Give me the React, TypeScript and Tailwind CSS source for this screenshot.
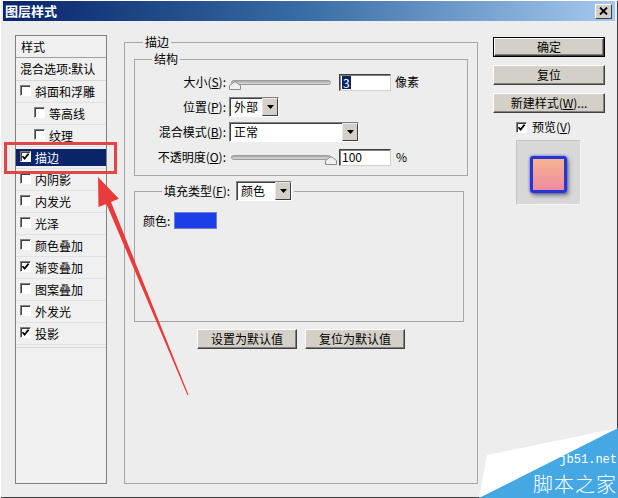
import type { ReactNode } from 'react'

const effects = [
  { label: '斜面和浮雕' },
  { label: '等高线', sub: true },
  { label: '纹理', sub: true },
  { label: '描边', checked: true, selected: true },
  { label: '内阴影' },
  { label: '内发光' },
  { label: '光泽' },
  { label: '颜色叠加' },
  { label: '渐变叠加', checked: true },
  { label: '图案叠加' },
  { label: '外发光' },
  { label: '投影', checked: true },
]

function Check({ checked }: { checked?: boolean }) {
  return (
    <span className="flex h-[11px] w-[11px] shrink-0 items-center justify-center border border-t-[#808080] border-l-[#808080] border-r-white border-b-white bg-white shadow-[inset_1px_1px_0_#404040]">
      {checked && (
        <svg width="9" height="9" viewBox="0 0 9 9">
          <path d="M1.5 4.2 L3.6 6.6 L7.6 1.6" stroke="#000" strokeWidth="1.7" fill="none" />
        </svg>
      )}
    </span>
  )
}

function Btn({ children, primary, w }: { children: ReactNode; primary?: boolean; w: string }) {
  return (
    <div className={`${w} ${primary ? 'border border-black' : ''} h-[20px] shrink-0`}>
      <div className="flex h-full w-full items-center justify-center border border-t-white border-l-white border-r-[#404040] border-b-[#404040] bg-[#d4d0c8] shadow-[inset_-1px_-1px_0_#808080] leading-none">
        {children}
      </div>
    </div>
  )
}

function Field({ children }: { children: ReactNode }) {
  return (
    <div className="flex h-[17px] w-[52px] items-center border border-t-[#404040] border-l-[#404040] border-r-[#d4d0c8] border-b-[#d4d0c8] bg-white pl-[2px] shadow-[inset_1px_1px_0_#808080]">
      {children}
    </div>
  )
}

function Select({ value, w }: { value: string; w: string }) {
  return (
    <div className={`${w} flex h-[20px] items-stretch border border-t-[#808080] border-l-[#808080] border-r-white border-b-white bg-white shadow-[inset_1px_1px_0_#404040]`}>
      <span className="flex flex-1 items-center pl-[4px] leading-none">{value}</span>
      <span className="flex w-[16px] items-center justify-center border border-t-[#e8e8e8] border-l-[#e8e8e8] border-r-[#404040] border-b-[#404040] bg-[#d4d0c8]">
        <svg width="7" height="4" viewBox="0 0 7 4">
          <path d="M0 0 H7 L3.5 4 Z" fill="#000" />
        </svg>
      </span>
    </div>
  )
}

function Slider({ at }: { at: string }) {
  return (
    <div className="relative flex h-[14px] w-[104px] items-center px-[2px]">
      <div className="h-[5px] w-full rounded-full border border-[#9a9a9a] bg-gradient-to-b from-[#a8a8a8] to-[#dcdcdc]" />
      <svg className={`absolute top-[6px] ${at}`} width="12" height="9" viewBox="0 0 12 9">
        <path d="M0.5 8.5 V4.5 L6 0.5 L11.5 4.5 V8.5 Z" fill="#efefef" stroke="#8a8a8a" />
      </svg>
    </div>
  )
}

function Row({ label, children }: { label: ReactNode; children: ReactNode }) {
  return (
    <div className="flex h-[20px] items-center">
      <span className="w-[91px] text-right leading-none">{label}</span>
      <div className="ml-[3px] flex items-center">{children}</div>
    </div>
  )
}

export default function App() {
  return (
    <div className="relative flex h-[498px] w-[618px] flex-col overflow-hidden bg-[#ededed] px-[3px] pt-[1px] font-['Noto_Sans_CJK_SC','Liberation_Sans',sans-serif] text-[12px] text-black shadow-[inset_1px_1px_0_#ffffff,inset_-1px_-1px_0_#404040]">
      {/* title bar */}
      <div className="flex h-[20px] shrink-0 items-center bg-gradient-to-r from-[#0a246a] via-[#3a6ea5] to-[#a6caf0] pl-[2px] pr-[3px]">
        <span className="text-[13px] font-bold text-white">图层样式</span>
        <div className="ml-auto flex h-[15px] w-[17px] items-center justify-center border border-t-white border-l-white border-r-[#404040] border-b-[#404040] bg-[#d4d0c8]">
          <svg width="9" height="8" viewBox="0 0 9 8">
            <path d="M1 0.5 L8 7.5 M8 0.5 L1 7.5" stroke="#000" strokeWidth="1.8" />
          </svg>
        </div>
      </div>

      <div className="flex flex-1 items-start pl-[12px] pt-[14px]">
        {/* style list */}
        <div className="flex h-[449px] w-[92px] shrink-0 flex-col border border-[#808080] bg-[#f0f0f0]">
          <div className="flex h-[22px] items-center border-b border-[#a0a0a0] pl-[5px]">样式</div>
          <div className="flex h-[23px] items-center border-b border-[#d8d8d8] pl-[4px] whitespace-nowrap">混合选项:默认</div>
          {effects.map((e) => (
            <div key={e.label} className="h-[22px] border-b border-[#e2e2e2] py-[2px]">
              <div
                className={`flex h-full items-start gap-[4px] ${e.sub ? 'pl-[18px]' : 'pl-[4px]'} ${
                  e.selected ? 'bg-[#0a246a] text-white' : ''
                }`}
              >
                <span className="mt-[2px]">
                  <Check checked={e.checked} />
                </span>
                <span className="leading-[18px]">{e.label}</span>
              </div>
            </div>
          ))}
          <div className="mt-[2px] border-t border-[#d8d8d8]" />
        </div>

        {/* stroke settings */}
        <fieldset className="ml-[17px] mt-[-1px] h-[450px] w-[354px] shrink-0 border border-[#a6a6a6] px-[9px] pt-[1px]">
          <legend className="ml-[9px] px-[2px] leading-[16px]">描边</legend>

          <fieldset className="h-[125px] border border-[#a6a6a6] pt-[5px]">
            <legend className="ml-[17px] px-[2px] leading-[16px]">结构</legend>
            <div className="flex flex-col gap-[5px]">
              <Row label={<>大小(<u>S</u>):</>}>
                <Slider at="left-[0px]" />
                <span className="ml-[6px]">
                  <Field>
                    <span className="bg-[#0a246a] px-[1px] leading-[13px] text-white">3</span>
                  </Field>
                </span>
                <span className="ml-[4px] leading-none">像素</span>
              </Row>
              <Row label={<>位置(<u>P</u>):</>}>
                <Select value="外部" w="w-[50px]" />
              </Row>
              <Row label={<>混合模式(<u>B</u>):</>}>
                <Select value="正常" w="w-[130px]" />
              </Row>
              <Row label={<>不透明度(<u>O</u>):</>}>
                <Slider at="left-[96px]" />
                <span className="ml-[6px]">
                  <Field>
                    <span className="leading-none">100</span>
                  </Field>
                </span>
                <span className="ml-[5px] leading-none">%</span>
              </Row>
            </div>
          </fieldset>

          <fieldset className="mr-[4px] mt-[5px] h-[141px] border border-[#a6a6a6] pl-[8px] pt-[11px]">
            <legend className="ml-[19px] px-[2px]">
              <div className="flex items-center gap-[6px]">
                <span className="leading-none">填充类型(<u>F</u>):</span>
                <Select value="颜色" w="w-[56px]" />
              </div>
            </legend>
            <div className="flex h-[17px] items-center gap-[4px]">
              <span className="leading-none">颜色:</span>
              <span className="h-[17px] w-[43px] border border-[#6f7fc8] bg-[#1b3ee8]" />
            </div>
          </fieldset>

          <div className="mt-[7px] flex justify-center gap-[8px]">
            <Btn w="w-[100px]">设置为默认值</Btn>
            <Btn w="w-[100px]">复位为默认值</Btn>
          </div>
        </fieldset>

        {/* right column */}
        <div className="ml-[15px] mt-[2px] flex w-[112px] shrink-0 flex-col gap-[8px]">
          <Btn w="w-[112px]" primary>
            确定
          </Btn>
          <Btn w="w-[112px]">复位</Btn>
          <Btn w="w-[112px]">
            新建样式(<u>W</u>)...
          </Btn>
          <div className="ml-[23px] mt-[-1px] flex h-[14px] items-center gap-[5px]">
            <Check checked />
            <span className="leading-none">预览(<u>V</u>)</span>
          </div>
          <div className="ml-[23px] mt-[-2px] h-[65px] w-[65px] border border-t-[#c4c4c4] border-l-[#c4c4c4] border-r-[#f4f4f4] border-b-[#f4f4f4] bg-[#d8d8d8] pl-[13px] pt-[15px]">
            <div className="h-[37px] w-[37px] rounded-[3px] border-[3px] border-[#2636d4] bg-gradient-to-b from-[#f5b490] to-[#f08aa0] shadow-[2px_3px_4px_rgba(0,0,0,0.35),0_0_3px_#4050ff]" />
          </div>
        </div>
      </div>

      {/* annotation: red box and arrow */}
      <svg className="pointer-events-none absolute left-0 top-0" width="618" height="498" viewBox="0 0 618 498">
        <rect x="5.5" y="143.5" width="110" height="29" fill="none" stroke="#e04646" strokeWidth="3" />
        <polygon points="188.6,395 187.4,395 106.4,203.9 98.5,207.1 98,177 118.9,198.7 111,201.9" fill="#e83c3c" />
      </svg>

      {/* watermark */}
      <div className="pointer-events-none absolute bottom-0 right-0 h-[72px] w-[140px]">
        <svg className="absolute left-0 top-0" width="140" height="72" viewBox="0 0 140 72">
          <polygon points="9,29 140,2 1,72" fill="#ffffff" />
          <polygon points="140,2 140,72 1,72" fill="#45a8e3" />
        </svg>
        <div className="absolute right-[1px] top-[28px] font-['Liberation_Mono',monospace] text-[12px] leading-[12px] text-white">
          jb51.net
        </div>
        <div className="absolute right-[1px] top-[47px] text-[20px] font-light leading-[22px] tracking-[1px] text-white">
          脚本之家
        </div>
      </div>
    </div>
  )
}
